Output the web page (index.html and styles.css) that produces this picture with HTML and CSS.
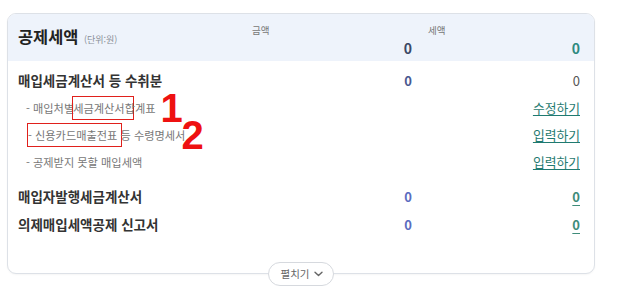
FILE: index.html
```html
<!DOCTYPE html>
<html lang="ko">
<head>
<meta charset="utf-8">
<link rel="stylesheet" href="styles.css">
</head>
<body>
<div class="wrap">
<div class="card">
  <div class="head">
    <div class="title">공제세액 <span class="unit">(단위:원)</span></div>
    <div class="hlabel c1">금액</div>
    <div class="hlabel c2">세액</div>
    <div class="hval c1">0</div>
    <div class="hval c2 teal">0</div>
  </div>
  <div class="body">
    <div class="row main">
      <div class="label">매입세금계산서 등 수취분</div>
      <div class="v1 dark">0</div>
      <div class="v2 gray">0</div>
    </div>
    <div class="row sub">
      <div class="label">- 매입처별<span class="mark m1">세금계산서</span>합계표<span class="num n1">1</span></div>
      <div class="v1"></div>
      <div class="v2"><a class="link">수정하기</a></div>
    </div>
    <div class="row sub">
      <div class="label"><span class="mark m2">- 신용카드매출전표</span> 등 수령명세서<span class="num n2">2</span></div>
      <div class="v1"></div>
      <div class="v2"><a class="link">입력하기</a></div>
    </div>
    <div class="row sub">
      <div class="label">- 공제받지 못할 매입세액</div>
      <div class="v1"></div>
      <div class="v2"><a class="link">입력하기</a></div>
    </div>
    <div class="row main gapped">
      <div class="label">매입자발행세금계산서</div>
      <div class="v1 blue">0</div>
      <div class="v2"><a class="zlink">0</a></div>
    </div>
    <div class="row main">
      <div class="label">의제매입세액공제 신고서</div>
      <div class="v1 blue">0</div>
      <div class="v2"><a class="zlink">0</a></div>
    </div>
  </div>
</div>
<div class="more"><span class="more-text">펼치기</span><svg class="chev" width="9" height="6" viewBox="0 0 9 6"><path d="M1 1.2 L4.5 4.6 L8 1.2" fill="none" stroke="#666" stroke-width="1.4" stroke-linecap="round" stroke-linejoin="round"/></svg></div>
</div>
</body>
</html>
```

FILE: styles.css
```css
html, body {
  margin: 0;
  padding: 0;
  background: #ffffff;
}
body {
  font-family: "Noto Sans CJK KR", "Noto Sans", sans-serif;
  color: #333;
  padding: 13px 30px 0 7px;
}
.wrap {
  display: flex;
  flex-direction: column;
  align-items: center;
}
.card {
  align-self: stretch;
  box-sizing: border-box;
  height: 261px;
  border: 1px solid #dde1e7;
  border-radius: 9px;
  background: #fff;
  box-shadow: 0 1px 2px rgba(0,0,0,0.04);
}
.head {
  display: grid;
  grid-template-columns: 1fr 176px 152px;
  grid-template-rows: 12px 19px;
  row-gap: 3px;
  padding: 10px 14px 3px 10px;
  background: #eef3fb;
  border-radius: 8px 8px 0 0;
  height: 34px;
}
.title {
  grid-row: 1 / 3;
  grid-column: 1;
  align-self: center;
  font-size: 16.4px;
  font-weight: 700;
  color: #222;
  padding-bottom: 6px;
  line-height: 20px;
  white-space: nowrap;
}
.unit {
  font-size: 9px;
  font-weight: 400;
  color: #8a8f98;
  margin-left: 1px;
}
.hlabel {
  grid-row: 1;
  font-size: 9.5px;
  line-height: 12px;
  color: #777;
}
.hlabel.c1 { grid-column: 2; }
.hlabel.c2 { grid-column: 3; }
.hval {
  grid-row: 2;
  font-size: 14px;
  font-weight: 700;
  line-height: 19px;
  text-align: right;
  color: #3b4866;
}
.hval.c1 { grid-column: 2; padding-right: 16px; }
.hval.c2 { grid-column: 3; }
.hval.teal { color: #2f8a80; }
.body {
  padding: 5px 14px 0 10px;
}
.row {
  display: grid;
  grid-template-columns: 1fr 176px 152px;
  align-items: center;
  height: 27px;
}
.row.main { height: 28px; }
.row.gapped { margin-top: 7px; }
.main .label {
  font-size: 13.5px;
  font-weight: 700;
  color: #333;
  white-space: nowrap;
}
.sub .label {
  font-size: 11.2px;
  color: #777;
  padding-left: 8px;
  white-space: nowrap;
}
.v1 {
  text-align: right;
  padding-right: 16px;
  font-size: 13px;
  font-weight: 700;
}
.v2 {
  text-align: right;
  font-size: 13px;
}
.dark { color: #4a5890; }
.blue { color: #5b6cc0; }
.gray { color: #555; font-weight: 400; }
.link {
  font-size: 12.8px;
  color: #1f7a70;
  text-decoration: underline;
  text-underline-offset: 2px;
}
.zlink {
  font-size: 13px;
  font-weight: 700;
  color: #3f8c7a;
  text-decoration: underline;
  text-underline-offset: 3px;
}
.mark {
  border: 1.5px solid #e0201c;
  padding: 3px 0;
}
.m1 {
  margin-left: -2px;
  padding-right: 8px;
  margin-right: -9px;
}
.m2 {
  margin-left: 1px;
  padding-left: 0;
  padding-right: 4px;
  margin-right: -5px;
}
.num {
  display: inline-block;
  font-family: "Liberation Sans", Arial, sans-serif;
  font-size: 40px;
  font-weight: 700;
  color: #ee1111;
  line-height: 0;
  vertical-align: middle;
  position: relative;
  top: -1px;
}
.n1 { margin-left: 5px; }
.n2 { margin-left: -4px; }
.more {
  position: relative;
  z-index: 1;
  margin-top: -12px;
  display: flex;
  align-items: center;
  gap: 5px;
  box-sizing: border-box;
  height: 24px;
  padding: 0 10px 0 12px;
  border: 1px solid #d6d9de;
  border-radius: 12px;
  background: #fff;
  color: #666;
}
.more-text {
  font-size: 10.5px;
  line-height: 14px;
  display: block;
}
.chev { display: block; }
```
